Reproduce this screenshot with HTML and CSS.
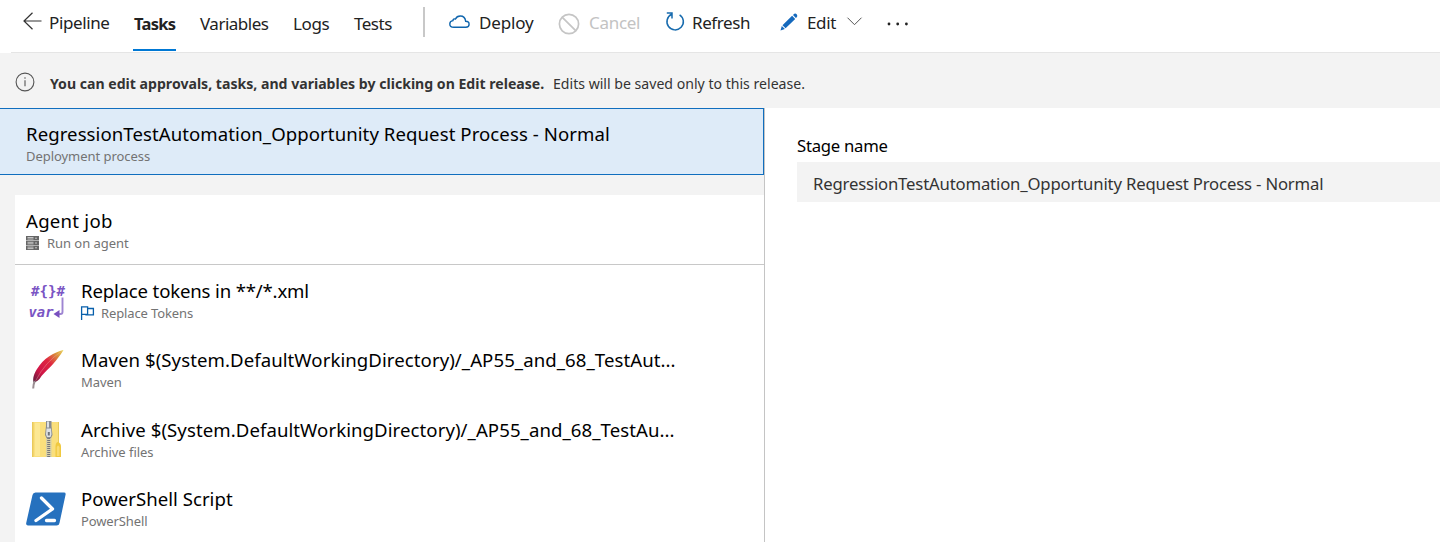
FILE: index.html
```html
<!DOCTYPE html>
<html lang="en">
<head>
<meta charset="utf-8">
<title>Release pipeline tasks</title>
<link rel="stylesheet" href="styles.css">
</head>
<body>
<header class="toolbar">
  <svg class="back-icon" width="19" height="18" viewBox="0 0 19 18"><path d="M9.500 .8 1 9l8.500 8.200M1 9h17.500"/></svg>
  <nav class="tabs">
    <a class="tab pipeline">Pipeline</a>
    <a class="tab active">Tasks</a>
    <a class="tab variables">Variables</a>
    <a class="tab logs">Logs</a>
    <a class="tab tests">Tests</a>
  </nav>
  <span class="divider"></span>
  <div class="commands">
    <svg class="cloud-icon" width="21" height="14" viewBox="0 0 21 14"><path d="M4.800 12.300h12c1.800 0 3.300-1.200 3.300-3s-1.500-3-3.400-3C16.300 3.200 14.300 1 11.300 1 9 1 7.300 2.100 6.500 4 4.900 3.500 4.100 4.300 3.900 5.600 2 5.900.8 7.100.8 8.900c0 2 1.700 3.400 4 3.400Z"/></svg>
    <span class="command deploy">Deploy</span>
    <svg class="cancel-icon" width="22" height="22" viewBox="0 0 22 22"><circle cx="11" cy="11" r="9.600"/><path d="m4.300 4.300 13.400 13.400"/></svg>
    <span class="command cancel">Cancel</span>
    <svg class="refresh-icon" width="20" height="20" viewBox="0 0 20 20"><path d="M14.600 3.800A8.200 8.200 0 1 1 6.600 3.300M1.800 2H7v5.600"/></svg>
    <span class="command refresh">Refresh</span>
    <svg class="edit-icon" width="18" height="18" viewBox="0 0 18 18"><path d="M13.500 1.500Q15-.2 16.700 1.200 18.200 2.900 16.500 4.400L15.900 5 13 2ZM12.100 2.800l3.100 3.100L5.600 15.300 2.500 12.200ZM1.800 13l3.100 3L.5 17.500Z"/></svg>
    <span class="command edit">Edit</span>
    <svg class="chevron-icon" width="15" height="9" viewBox="0 0 15 9"><path d="m.5.7 7 7 7-7"/></svg>
    <svg class="more-icon" width="22" height="4" viewBox="0 0 22 4"><circle cx="2" cy="2" r="1.400"/><circle cx="10.700" cy="2" r="1.400"/><circle cx="19.400" cy="2" r="1.400"/></svg>
  </div>
</header>
<section class="notice">
  <svg class="info-icon" width="20" height="20" viewBox="0 0 20 20"><circle cx="10" cy="10" r="8.900"/><path d="M10 8.200v6M10 5.200v1.500"/></svg>
  <strong class="notice-strong">You can edit approvals, tasks, and variables by clicking on Edit release.</strong>
  <span class="notice-text">Edits will be saved only to this release.</span>
</section>
<main class="workspace">
  <section class="process">
    <div class="stage">
      <div class="title stage-title">RegressionTestAutomation_Opportunity Request Process - Normal</div>
      <div class="subtitle deployment">Deployment process</div>
    </div>
    <div class="job">
      <div class="agent">
        <div class="title agent-title">Agent job</div>
        <div class="subtitle with-icon">
          <svg class="server-icon" width="13" height="14" viewBox="0 0 13 14"><path class="rack" d="M0 0h13v4.300H0zM0 4.800h13v4.300H0zM0 9.600h13V14H0z"/><path class="slots" d="M1.500 1.500h6M1.500 3h6M9 2.200h2M1.500 6.300h6M1.500 7.800h6M9 7h2M1.500 11.100h6M1.500 12.600h6M9 11.800h2"/></svg>
          <span class="run">Run on agent</span>
        </div>
      </div>
      <div class="task">
        <svg class="task-icon" width="40" height="40" viewBox="0 0 40 40"><g class="token-text"><text x="5" y="14.500" textLength="34" lengthAdjust="spacingAndGlyphs">#{}#</text><text class="var" x="2.500" y="35.500" textLength="25" lengthAdjust="spacingAndGlyphs">var</text></g><path class="token-arrow" d="M36.500 16.500V31q0 2-2 2h-4"/><path class="token-tip" d="m27.500 33 6-4v8z"/></svg>
        <div class="task-copy">
          <div class="title replace-title">Replace tokens in **/*.xml</div>
          <div class="subtitle with-icon"><svg class="flag-icon" width="13" height="15" viewBox="0 0 13 15"><path d="M.6 14V.8h6v7.500h-6M6.600 2.500h5.800v6.300H5V8.300"/></svg><span class="replace-sub">Replace Tokens</span></div>
        </div>
      </div>
      <div class="task maven">
        <svg class="task-icon" width="40" height="40" viewBox="0 0 40 40"><defs><linearGradient id="feather" x1="1" y1="0" x2="0" y2="1"><stop offset="0" stop-color="#e8dc4a"/><stop offset=".2" stop-color="#d98a3c"/><stop offset=".42" stop-color="#df2741"/><stop offset=".72" stop-color="#d01547"/><stop offset="1" stop-color="#54203d"/></linearGradient></defs><path fill="url(#feather)" d="M37.500 0C28 2 17 9 11 19c-3 5-4.500 9-3.500 13.500C11 32 13 30 15.500 26 23 18 31 11 37.500 0Z"/><path class="feather-vein" d="M36 1Q19 12 9.500 31"/><path class="feather-stem" d="M8.800 31Q7.400 34 7.200 38.500"/></svg>
        <div class="task-copy"><div class="title maven-title">Maven $(System.DefaultWorkingDirectory)/_AP55_and_68_TestAut...</div><div class="subtitle maven-sub">Maven</div></div>
      </div>
      <div class="task archive">
        <svg class="task-icon" width="40" height="40" viewBox="0 0 40 40"><path fill="#fadf7c" d="M6.500 2H33v35H6.500z"/><path fill="#e9ca5c" d="M6 2h1.500v35H6zM32 2h1v21h-1z"/><path fill="#fce894" d="M9 3h5v33H9z"/><path fill="#f0c93f" d="M29.500 37V26.500q0-4 2.500-4.500 3 1 3 4.500V37z"/><path fill="#fadb71" d="M30.800 36v-9q1.200-3 2.700 0v9z"/><path fill="#d7d0a6" d="M20 17h5.500v20H20z"/><path class="zip" d="M22.700 18v19"/><path fill="#888c91" d="M20 1h5.500v5l1 9-1.500 3h-4.500L19 15l1-9z"/><path fill="#dee1e4" d="M21 1.500h2v6h-2zM20.500 8.500h4.500l.5 6-1 2.500H21l-1-2.500z"/><path fill="#6e7379" d="M21.800 12h2v3.500h-2z"/></svg>
        <div class="task-copy"><div class="title archive-title">Archive $(System.DefaultWorkingDirectory)/_AP55_and_68_TestAu...</div><div class="subtitle archive-sub">Archive files</div></div>
      </div>
      <div class="task">
        <svg class="task-icon" width="40" height="40" viewBox="0 0 40 40"><path fill="#2671be" d="M9.500 3.500H38q2 0 1.600 2L33.500 34q-.4 2.500-3 2.500H2Q-.2 36.500.2 34L6.500 6q.5-2.500 3-2.500Z"/><path class="shell" d="M15.500 9 26.500 20 10 31.500M20.500 31.500H28.500"/></svg>
        <div class="task-copy"><div class="title power-title">PowerShell Script</div><div class="subtitle power-sub">PowerShell</div></div>
      </div>
    </div>
  </section>
  <section class="details">
    <div class="field-label">Stage name</div>
    <div class="field"><span class="field-value">RegressionTestAutomation_Opportunity Request Process - Normal</span></div>
  </section>
</main>
</body>
</html>
```
FILE: styles.css
```css
* { box-sizing: border-box; }
body { margin: 0; height: 542px; overflow: hidden; background: #fff; color: #000; font-family: "Noto Sans", "Open Sans", sans-serif; white-space: nowrap; }
svg { flex: none; overflow: visible; fill: none; }
.toolbar { height: 53px; display: flex; align-items: flex-start; border-bottom: 1px solid #e5e5e5; margin-left: 11px; font-size: 17px; letter-spacing: -.38px; color: #222; }
.back-icon { margin: 12px 7px 0 12px; stroke: #333; stroke-width: 1.2; }
.tabs { display: flex; }
.tab { height: 52px; padding-top: 10px; line-height: 28px; flex: none; }
.pipeline { width: 85px; padding-top: 9px; }
.active { width: 43px; margin-right: 24px; height: 51px; border-bottom: 2px solid #0078d4; font-weight: 700; font-size: 16.5px; letter-spacing: -.7px; margin-left: -1px; padding-left: 1px; }
.variables { width: 93px; letter-spacing: -.5px; }
.logs { width: 61px; }
.tests { width: 69px; letter-spacing: -.5px; }
.divider { width: 2px; height: 30px; margin-top: 7px; background: #c8c8c8; }
.commands { display: flex; }
.command { line-height: 28px; padding-top: 9px; flex: none; }
.cloud-icon { margin: 15px 9px 0 24px; stroke: #0f65ad; stroke-width: 1.4; }
.deploy { width: 79px; letter-spacing: -.15px; }
.cancel-icon { margin: 13px 9px 0 0; stroke: #c5c5c5; stroke-width: 1.7; }
.cancel { width: 76px; color: #c3c3c3; letter-spacing: -.3px; }
.refresh-icon { margin: 11px 7px 0 0; stroke: #176bae; stroke-width: 1.5; }
.refresh { width: 88px; letter-spacing: -.42px; }
.edit-icon { margin: 13px 9px 0 0; fill: #1469bd; }
.edit { width: 40px; }
.chevron-icon { margin: 17px 25px 0 0; stroke: #555; }
.more-icon { margin-top: 22px; fill: #222; }
.notice { height: 55px; background: #f3f3f3; display: flex; color: #333; font-size: 14.1px; line-height: 20px; }
.info-icon { margin: 19px 15px 0; stroke: #555; stroke-width: 1.1; }
.notice-strong { width: 503px; padding-top: 21px; }
.notice-text { padding-top: 21px; }
.workspace { height: 434px; display: grid; grid-template-columns: 765px 1fr; }
.process { background: #f3f3f3; border-right: 1px solid #c4c4c4; }
.stage { height: 67px; background: #deebf8; border: 1px solid #106ebe; border-left: 0; padding: 11px 0 0 26px; }
.title { height: 28px; font-size: 18.6px; line-height: 28px; letter-spacing: .07px; }
.subtitle { height: 16px; font-size: 13px; line-height: 16px; color: #737373; letter-spacing: -.05px; }
.agent-title { letter-spacing: .25px; }
.replace-title { letter-spacing: -.17px; }
.power-title { letter-spacing: .02px; }
.power-sub, .replace-sub { letter-spacing: -.12px; }
.job { margin: 20px 0 0 15px; background: #fff; height: 347px; overflow: hidden; }
.agent { height: 70px; padding: 12px 0 0 11px; border-bottom: 1px solid #c8c8c8; }
.with-icon { display: flex; }
.server-icon { margin: 1px 8px 0 0; }
.rack { fill: #666; }
.slots { stroke: #ddd; stroke-width: .8; }
.task { display: flex; height: 69px; padding: 12px 0 0 11px; }
.maven { height: 70px; }
.task-icon { margin: 4px 15px 0 0; }
.token-text { fill: #7a55c4; font: 700 14.5px "DejaVu Sans Mono", monospace; letter-spacing: 0; }
.var { font-style: italic; }
.token-arrow { stroke: #9e85d2; stroke-width: 1.9; }
.token-tip { fill: #7850bf; }
.flag-icon { margin: 1px 7px 0 0; stroke: #075fab; stroke-width: 1.3; }
.feather-vein { stroke: #edaaa7; stroke-width: .4; }
.feather-stem { stroke: #9b8f93; stroke-width: 2; }
.zip { stroke: #77777a; stroke-width: 3; stroke-dasharray: 1 1; }
.shell { stroke: #fff; stroke-width: 3.300; stroke-linecap: round; stroke-linejoin: round; }
.details { padding: 24px 0 0 32px; }
.field-label { height: 30px; line-height: 28px; font-size: 16.7px; letter-spacing: -.25px; }
.field { height: 40px; background: #f3f3f3; padding-left: 16px; line-height: 43px; font-size: 16.7px; letter-spacing: -.16px; color: #333; }
```
